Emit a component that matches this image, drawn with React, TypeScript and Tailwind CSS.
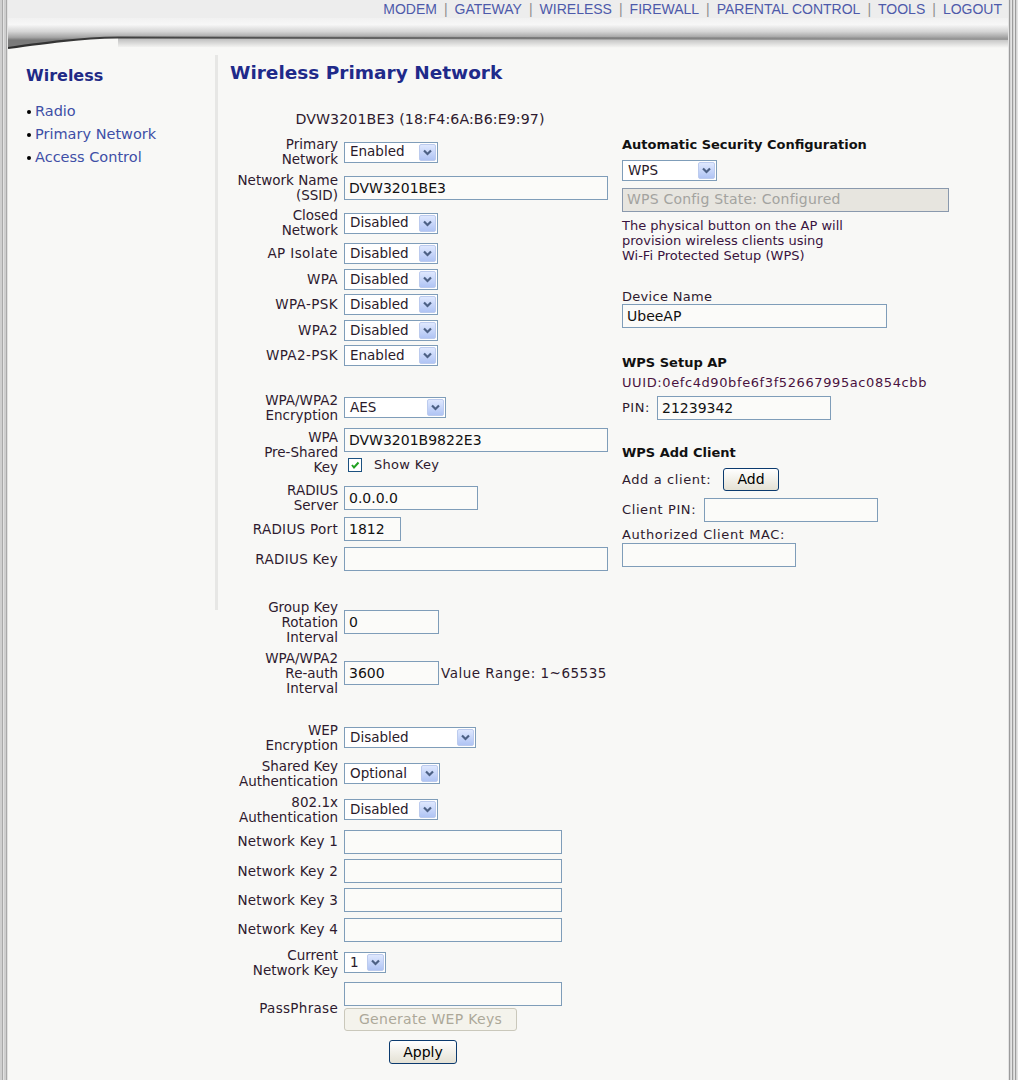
import React from "react";

const Chevron = () => (
  <div className="w-[17px] h-[17px] shrink-0 rounded-[2px] bg-gradient-to-b from-[#dfe8fe] to-[#b0c4f4] border border-[#bccbee] flex items-center justify-center">
    <svg width="9" height="7" viewBox="0 0 9 7">
      <path d="M1 1.5 L4.5 5 L8 1.5" fill="none" stroke="#4d6185" strokeWidth="2.2" />
    </svg>
  </div>
);

const Select = ({ value, w }: { value: string; w: string }) => (
  <div className={`flex items-center justify-between h-[21px] border border-[#7f9db9] bg-white pl-[5px] pr-[1px] shrink-0 ${w}`}>
    <span className="text-[13.5px] leading-none text-[#2a1a2a]">{value}</span>
    <Chevron />
  </div>
);

const Input = ({ value = "", w }: { value?: string; w: string }) => (
  <input
    readOnly
    defaultValue={value}
    className={`h-[24px] border border-[#7f9db9] bg-[#fbfbf9] px-[4px] text-[14px] text-[#111] outline-none shrink-0 font-['DejaVu_Sans',Verdana,sans-serif] ${w}`}
  />
);

const Label = ({ children, className = "" }: { children: React.ReactNode; className?: string }) => (
  <div className={`w-[108px] shrink-0 text-right leading-[15px] text-[13.5px] ${className}`}>{children}</div>
);

const Row = ({ className, children }: { className: string; children: React.ReactNode }) => (
  <div className={`flex items-center gap-[6px] ${className}`}>{children}</div>
);

const Swoosh = () => (
  <svg width="1000" height="32" viewBox="0 0 1000 32" className="block">
    <defs>
      <linearGradient id="g1" x1="0" y1="0" x2="0" y2="22" gradientUnits="userSpaceOnUse">
        <stop offset="0" stopColor="#f1f1f1" />
        <stop offset="0.3" stopColor="#f7f7f7" />
        <stop offset="0.62" stopColor="#d4d4d4" />
        <stop offset="0.88" stopColor="#a4a4a4" />
        <stop offset="1" stopColor="#7a7a7a" />
      </linearGradient>
      <linearGradient id="g2" x1="0" y1="19" x2="0" y2="30" gradientUnits="userSpaceOnUse">
        <stop offset="0" stopColor="#b4b4b4" />
        <stop offset="1" stopColor="#f8f8f6" />
      </linearGradient>
      <linearGradient id="g3" x1="0" y1="0" x2="1000" y2="0" gradientUnits="userSpaceOnUse">
        <stop offset="0" stopColor="#2e2e2e" />
        <stop offset="0.15" stopColor="#444" />
        <stop offset="0.5" stopColor="#777" />
        <stop offset="1" stopColor="#9a9a9a" />
      </linearGradient>
    </defs>
    <rect x="0" y="0" width="1000" height="32" fill="#f8f8f6" />
    <path d="M110,20 L1000,21 L1000,30 L110,29 Z" fill="url(#g2)" />
    <path d="M0,0 H1000 V21 L110,19.5 C70,20 35,25 0,30 Z" fill="url(#g1)" />
    <path d="M0,30 C35,25 70,20 110,19.5 L1000,21" fill="none" stroke="url(#g3)" strokeWidth="2.2" />
  </svg>
);

const navItems = ["MODEM", "GATEWAY", "WIRELESS", "FIREWALL", "PARENTAL CONTROL", "TOOLS", "LOGOUT"];

export default function App() {
  const txt = "text-[#2e1a2e]";
  return (
    <div className={`w-[1018px] h-[1080px] overflow-hidden flex bg-[#f8f8f6] font-['DejaVu_Sans',Verdana,sans-serif] ${txt}`}>
      <div className="w-[8px] shrink-0 bg-[repeating-linear-gradient(90deg,#cfcfcf_0px,#cfcfcf_2px,#a9a9a9_2px,#a9a9a9_3px,#e2e2e2_3px,#e2e2e2_4px)]" />
      <div className="flex-1 flex flex-col min-w-0">
        {/* header */}
        <div className="h-[18px] bg-[#ededed] flex items-center justify-end pr-[6px] font-['Liberation_Sans',Arial,sans-serif] text-[14px] leading-none text-[#4d5aaa]">
          {navItems.map((n, i) => (
            <React.Fragment key={n}>
              {i > 0 && <span className="mx-[7px] text-[#8f8f8f]">|</span>}
              <span>{n}</span>
            </React.Fragment>
          ))}
        </div>
        <Swoosh />
        {/* content */}
        <div className="flex flex-1">
          <div className="w-[207px] shrink-0 pl-[18px]">
            <div className="mt-[15px] text-[16px] leading-[22px] font-bold text-[#1f2a86]">Wireless</div>
            <ul className="mt-[13px] text-[14.5px] leading-[23px] text-[#3e4fa6]">
              {["Radio", "Primary Network", "Access Control"].map((l) => (
                <li key={l} className="flex items-center">
                  <span className="w-[4px] h-[4px] rounded-full bg-black ml-[1px] mr-[4px]" />
                  {l}
                </li>
              ))}
            </ul>
          </div>
          <div className="w-[3px] h-[555px] mt-[5px] bg-[#e7e7e5] shrink-0" />
          <div className="ml-[12px] flex flex-col">
            <div className="mt-[12px] text-[18.5px] leading-[22px] font-bold text-[#1f2a8a]">Wireless Primary Network</div>
            <div className="mt-[28px] flex">
              {/* left column */}
              <div className="w-[380px] flex flex-col">
                <div className="text-center text-[14.2px] leading-[15px] tracking-[0.1px]">DVW3201BE3 (18:F4:6A:B6:E9:97)</div>
                <Row className="mt-[10px] h-[30px]">
                  <Label>Primary<br />Network</Label>
                  <Select value="Enabled" w="w-[94px]" />
                </Row>
                <Row className="mt-[6px] h-[30px]">
                  <Label>Network Name<br />(SSID)</Label>
                  <Input value="DVW3201BE3" w="w-[264px]" />
                </Row>
                <Row className="mt-[5px] h-[30px]">
                  <Label>Closed<br />Network</Label>
                  <Select value="Disabled" w="w-[94px]" />
                </Row>
                <div className="mt-[3px]" />
                {[
                  ["AP Isolate", "Disabled"],
                  ["WPA", "Disabled"],
                  ["WPA-PSK", "Disabled"],
                  ["WPA2", "Disabled"],
                  ["WPA2-PSK", "Enabled"],
                ].map(([l, v]) => (
                  <Row key={l} className="h-[25.5px]">
                    <Label className="tracking-[0.4px]">{l}</Label>
                    <Select value={v} w="w-[94px]" />
                  </Row>
                ))}
                <Row className="mt-[24px] h-[30px]">
                  <Label>WPA/WPA2<br />Encryption</Label>
                  <Select value="AES" w="w-[102px]" />
                </Row>
                <div className="mt-[5.5px] flex items-start gap-[6px]">
                  <Label className="pt-[1.5px]">WPA<br />Pre-Shared<br />Key</Label>
                  <div className="flex flex-col">
                    <Input value="DVW3201B9822E3" w="w-[264px]" />
                    <div className="mt-[4px] h-[17px] flex items-center">
                      <div className="ml-[4px] w-[14px] h-[14px] border border-[#1c5180] bg-white flex items-center justify-center">
                        <svg width="10" height="10" viewBox="0 0 10 10">
                          <path d="M2 5 L4 7.5 L8.5 2.5" stroke="#21a121" strokeWidth="2" fill="none" />
                        </svg>
                      </div>
                      <span className="ml-[12px] text-[13px] leading-none tracking-[0.3px]">Show Key</span>
                    </div>
                  </div>
                </div>
                <Row className="mt-[8px] h-[30px]">
                  <Label>RADIUS<br />Server</Label>
                  <Input value="0.0.0.0" w="w-[134px]" />
                </Row>
                <Row className="mt-[4.5px] h-[24px]">
                  <Label className="tracking-[0.3px]">RADIUS Port</Label>
                  <Input value="1812" w="w-[57px]" />
                </Row>
                <Row className="mt-[6px] h-[24px]">
                  <Label className="tracking-[0.3px]">RADIUS Key</Label>
                  <Input w="w-[264px]" />
                </Row>
                <Row className="mt-[28.5px] h-[45px]">
                  <Label>Group Key<br />Rotation<br />Interval</Label>
                  <Input value="0" w="w-[95px]" />
                </Row>
                <Row className="mt-[6px] h-[45px]">
                  <Label>WPA/WPA2<br />Re-auth<br />Interval</Label>
                  <Input value="3600" w="w-[95px]" />
                  <span className="-ml-[4px] text-[13.5px] tracking-[0.5px] whitespace-nowrap">Value Range: 1~65535</span>
                </Row>
                <Row className="mt-[27px] h-[30px]">
                  <Label>WEP<br />Encryption</Label>
                  <Select value="Disabled" w="w-[132px]" />
                </Row>
                <Row className="mt-[6px] h-[30px]">
                  <Label>Shared Key<br />Authentication</Label>
                  <Select value="Optional" w="w-[96px]" />
                </Row>
                <Row className="mt-[6px] h-[30px]">
                  <Label>802.1x<br />Authentication</Label>
                  <Select value="Disabled" w="w-[94px]" />
                </Row>
                {["Network Key 1", "Network Key 2", "Network Key 3", "Network Key 4"].map((l) => (
                  <Row key={l} className="mt-[5.3px] h-[24px]">
                    <Label className="tracking-[0.2px]">{l}</Label>
                    <Input w="w-[218px]" />
                  </Row>
                ))}
                <Row className="mt-[6px] h-[30px]">
                  <Label>Current<br />Network Key</Label>
                  <Select value="1" w="w-[42px]" />
                </Row>
                <Row className="mt-[4.5px]">
                  <Label className="pt-[3px] tracking-[0.3px]">PassPhrase</Label>
                  <div className="flex flex-col">
                    <Input w="w-[218px]" />
                    <button className="mt-[2px] h-[23px] w-[173px] rounded-[3px] border border-[#cac8bb] bg-[#f4f3ec] text-[14px] tracking-[0.3px] text-[#aca899]">
                      Generate WEP Keys
                    </button>
                  </div>
                </Row>
                <button className="mt-[9px] ml-[159px] h-[24px] w-[68px] rounded-[3px] border border-[#0b3a6e] bg-gradient-to-b from-white to-[#e4e1d4] text-[14px] text-black">
                  Apply
                </button>
              </div>
              {/* right column */}
              <div className="ml-[12px] flex flex-col text-[13px] leading-[15px]">
                <div className="mt-[24.5px] font-bold text-[#111]">Automatic Security Configuration</div>
                <div className="mt-[8.5px]">
                  <Select value="WPS" w="w-[95px]" />
                </div>
                <div className="mt-[6.5px] h-[24px] w-[327px] border border-[#8a99ad] bg-[#e7e5df] flex items-center pl-[4px] text-[14px] tracking-[0.2px] text-[#a3a3a0]">
                  WPS Config State: Configured
                </div>
                <div className="mt-[6.5px] text-[#3a1440]">
                  The physical button on the AP will<br />
                  provision wireless clients using<br />
                  Wi-Fi Protected Setup (WPS)
                </div>
                <div className="mt-[26px] tracking-[0.3px]">Device Name</div>
                <Input value="UbeeAP" w="w-[265px]" />
                <div className="mt-[27px] font-bold text-[#111]">WPS Setup AP</div>
                <div className="mt-[5px] text-[#4a1240] tracking-[0.6px]">UUID:0efc4d90bfe6f3f52667995ac0854cbb</div>
                <div className="mt-[5.5px] flex items-center h-[24px]">
                  <span className="w-[35px] tracking-[0.5px]">PIN:</span>
                  <Input value="21239342" w="w-[174px]" />
                </div>
                <div className="mt-[25.5px] font-bold text-[#111]">WPS Add Client</div>
                <div className="mt-[7.5px] flex items-center h-[23px]">
                  <span className="w-[101px] tracking-[0.6px]">Add a client:</span>
                  <button className="h-[23px] w-[56px] rounded-[3px] border border-[#0b3a6e] bg-gradient-to-b from-white to-[#e4e1d4] text-[14px] text-black">
                    Add
                  </button>
                </div>
                <div className="mt-[7px] flex items-center h-[24px]">
                  <span className="w-[82px] tracking-[0.6px]">Client PIN:</span>
                  <Input w="w-[174px]" />
                </div>
                <div className="mt-[5.5px] tracking-[0.6px]">Authorized Client MAC:</div>
                <div className="mt-[0.5px]">
                  <Input w="w-[174px]" />
                </div>
              </div>
            </div>
          </div>
        </div>
      </div>
      <div className="w-[10px] shrink-0 bg-[repeating-linear-gradient(90deg,#e4e4e4_0px,#e4e4e4_1px,#9c9c9c_1px,#9c9c9c_2px,#d4d4d4_2px,#d4d4d4_3px)]" />
    </div>
  );
}
